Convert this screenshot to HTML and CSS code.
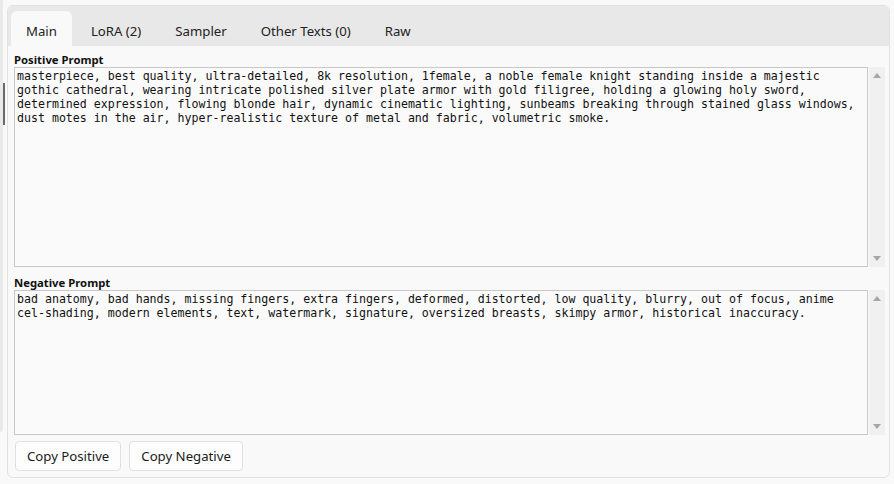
FILE: index.html
```html
<!DOCTYPE html>
<html>
<head>
<meta charset="utf-8">
<link rel="stylesheet" href="styles.css">
</head>
<body>
<div class="side-strip"><div class="side-thumb"></div></div>
<div class="panel">
  <div class="tabbar">
    <div class="tab active">Main</div>
    <div class="tab">LoRA (2)</div>
    <div class="tab">Sampler</div>
    <div class="tab">Other Texts (0)</div>
    <div class="tab">Raw</div>
  </div>
  <div class="content">
    <div class="label">Positive Prompt</div>
    <div class="field field-pos">
      <textarea class="text" readonly>masterpiece, best quality, ultra-detailed, 8k resolution, 1female, a noble female knight standing inside a majestic gothic cathedral, wearing intricate polished silver plate armor with gold filigree, holding a glowing holy sword, determined expression, flowing blonde hair, dynamic cinematic lighting, sunbeams breaking through stained glass windows, dust motes in the air, hyper-realistic texture of metal and fabric, volumetric smoke.</textarea>
      <div class="scrollbar"><span class="arrow up"></span><span class="arrow down"></span></div>
    </div>
    <div class="label label-neg">Negative Prompt</div>
    <div class="field field-neg">
      <textarea class="text" readonly>bad anatomy, bad hands, missing fingers, extra fingers, deformed, distorted, low quality, blurry, out of focus, anime cel-shading, modern elements, text, watermark, signature, oversized breasts, skimpy armor, historical inaccuracy.</textarea>
      <div class="scrollbar"><span class="arrow up"></span><span class="arrow down"></span></div>
    </div>
    <div class="buttons">
      <button class="btn">Copy Positive</button>
      <button class="btn">Copy Negative</button>
    </div>
  </div>
</div>
</body>
</html>
```
FILE: styles.css
```css
html, body {
  margin: 0;
  padding: 0;
  background: #f9f9f9;
  width: 894px;
  height: 484px;
  overflow: hidden;
  font-family: "Noto Sans", "Open Sans", sans-serif;
  color: #1b1b1b;
}

.side-strip {
  position: absolute;
  left: 0;
  top: 0;
  width: 3px;
  height: 432px;
  background: #e9e9e9;
  border-radius: 0 0 3px 0;
}

.side-thumb {
  position: absolute;
  left: 3px;
  top: 83px;
  width: 2px;
  height: 42px;
  background: #6a6a6a;
}

.panel {
  margin: 5px 4px 0 7px;
  height: 471px;
  border: 1px solid #e2e2e2;
  border-radius: 6px;
  background: #f9f9f9;
  display: flex;
  flex-direction: column;
  overflow: hidden;
}

.tabbar {
  height: 35px;
  padding: 5px 0 0 3px;
  background: #e8e8e8;
  display: flex;
  gap: 4px;
  flex-shrink: 0;
}

.tab {
  height: 35px;
  padding: 4px 15px 0;
  display: flex;
  align-items: center;
  box-sizing: border-box;
  font-size: 13.2px;
  color: #222;
  border-radius: 6px 6px 0 0;
}

.tab.active {
  background: #f9f9f9;
}

.content {
  flex: 1;
  padding: 7px 4px 6px 6px;
  display: flex;
  flex-direction: column;
}

.label {
  height: 14px;
  line-height: 14px;
  font-size: 11.3px;
  font-weight: 700;
  color: #111;
}

.label-neg {
  margin-top: 9px;
}

.field {
  display: flex;
  gap: 1px;
}

.field-pos {
  height: 200px;
}

.field-neg {
  height: 145px;
}

.text {
  width: 854px;
  height: 100%;
  box-sizing: border-box;
  margin: 0;
  padding: 1px 2px;
  border: 1px solid #c8c8c8;
  background: #fafafa;
  font-family: "DejaVu Sans Mono", "Liberation Mono", monospace;
  font-size: 11.6px;
  line-height: 14px;
  color: #111;
  resize: none;
  overflow: hidden;
  outline: none;
}

.scrollbar {
  width: 16px;
  height: 100%;
  background: #f0f0f0;
  display: flex;
  flex-direction: column;
  justify-content: space-between;
  align-items: center;
  padding: 6px 0;
  box-sizing: border-box;
}

.arrow {
  width: 0;
  height: 0;
  border-left: 4.5px solid transparent;
  border-right: 4.5px solid transparent;
}

.arrow.up {
  border-bottom: 5px solid #a6a6a6;
}

.arrow.down {
  border-top: 5px solid #a6a6a6;
}

.buttons {
  margin-top: 6px;
  margin-left: 1px;
  display: flex;
  gap: 8px;
}

.btn {
  height: 30px;
  padding: 0 11px;
  border: 1px solid #e0e0e0;
  border-radius: 4px;
  background: #fdfdfd;
  font-family: "Noto Sans", "Open Sans", sans-serif;
  font-size: 13.2px;
  color: #1b1b1b;
}
```
